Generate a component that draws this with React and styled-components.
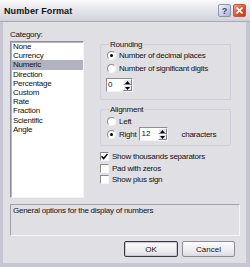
import React from 'react'
import styled, {createGlobalStyle} from 'styled-components'

const GlobalStyle = createGlobalStyle`
  html, body {
    margin: 0;
    padding: 0;
    background: #ffffff;
  }
  body {
    font-family: "Liberation Sans", Arial, sans-serif;
    color: #111;
  }
`

const Window = styled.div`
  width: 250px;
  height: 267px;
  display: flex;
  flex-direction: column;
  background: #c6c5d3;
`

const TitleBar = styled.div`
  height: 22px;
  flex: none;
  box-sizing: border-box;
  display: flex;
  align-items: center;
  padding: 0 4px 0 4px;
  background: linear-gradient(#fbfbfd 0%, #e6e6ec 45%, #d2d2dc 100%);
  border-bottom: 1px solid #a9a8b8;
`

const Title = styled.div`
  flex: 1;
  font-size: 9px;
  font-weight: bold;
  letter-spacing: 0.1px;
`

const CaptionButton = styled.div`
  width: 13px;
  height: 13px;
  box-sizing: border-box;
  margin-left: 2px;
  border-radius: 2px;
  border: 1px solid ${p => (p.close ? '#c4583a' : '#8e94b0')};
  background: ${p =>
    p.close
      ? 'linear-gradient(135deg, #f0a088, #d8502c 60%, #c43c1c)'
      : 'linear-gradient(135deg, #f4f6fb, #c8cce0 60%, #aeb3cc)'};
  display: flex;
  align-items: center;
  justify-content: center;
  font-size: 9px;
  font-weight: bold;
  color: #3c4466;
`

const Frame = styled.div`
  flex: 1;
  display: flex;
  flex-direction: column;
  border-left: 3px solid #c6c5d3;
  border-right: 4px solid #c6c5d3;
  border-bottom: 4px solid #c6c5d3;
`

const Body = styled.div`
  flex: 1;
  display: flex;
  flex-direction: column;
  background: #e0dfe3;
  padding: 8px 6px 6px 7px;
  font-size: 8px;
  letter-spacing: -0.25px;
`

const MainGrid = styled.div`
  display: grid;
  grid-template-columns: 74px 131px;
  column-gap: 16px;
  height: 168px;
`

const Column = styled.div`
  display: flex;
  flex-direction: column;
`

const Label = styled.div`
  height: 11px;
  line-height: 10px;
`

const ListBox = styled.div`
  height: 157px;
  box-sizing: border-box;
  background: #fff;
  border-top: 1px solid #8e8d98;
  border-left: 1px solid #8e8d98;
  border-right: 1px solid #f4f4f6;
  border-bottom: 1px solid #f4f4f6;
  box-shadow: inset 1px 1px 0 #b4b3bc;
`

const ListItem = styled.div`
  height: 9.2px;
  line-height: 9.2px;
  padding-left: 2px;
  background: ${p => (p.selected ? '#b3b2bf' : 'transparent')};
`

const Group = styled.fieldset`
  margin: ${p => p.top}px 0 0 0;
  padding: 0 4px ${p => p.bottom}px 6px;
  border: 1px solid #cfcedb;
  border-radius: 2px;
  min-inline-size: 0;
  display: flex;
  flex-direction: column;
`

const Legend = styled.legend`
  padding: 0 1px;
  margin-left: 2px;
  line-height: 9px;
  height: 9px;
`

const OptionRow = styled.div`
  display: flex;
  align-items: center;
  height: ${p => p.h || 11}px;
  margin-top: ${p => p.gap || 0}px;
`

const Radio = styled.span`
  width: 9px;
  height: 9px;
  box-sizing: border-box;
  flex: none;
  border-radius: 50%;
  background: #fff;
  border: 1px solid;
  border-color: #8a8993 #f6f6f8 #f6f6f8 #8a8993;
  margin-right: 3px;
  display: flex;
  align-items: center;
  justify-content: center;
  &::after {
    content: '';
    width: 3px;
    height: 3px;
    border-radius: 50%;
    background: ${p => (p.checked ? '#000' : 'transparent')};
  }
`

const SpinBox = styled.div`
  width: ${p => p.w}px;
  height: 14px;
  box-sizing: border-box;
  flex: none;
  display: flex;
  background: #fff;
  border-top: 1px solid #8e8d98;
  border-left: 1px solid #8e8d98;
  border-right: 1px solid #f4f4f6;
  border-bottom: 1px solid #f4f4f6;
  margin-left: ${p => p.ml || 0}px;
`

const SpinValue = styled.div`
  flex: 1;
  line-height: 11px;
  padding-left: 1px;
  letter-spacing: 0;
`

const SpinButtons = styled.div`
  width: 9px;
  display: flex;
  flex-direction: column;
`

const SpinButton = styled.div`
  flex: 1;
  background: #e6e5ea;
  border: 1px solid;
  border-color: #fdfdfd #85848e #85848e #fdfdfd;
  display: flex;
  align-items: center;
  justify-content: center;
`

const Suffix = styled.span`
  margin-left: 13px;
`

const CheckRow = styled.div`
  display: flex;
  align-items: center;
  height: 11.5px;
`

const CheckBox = styled.span`
  width: 9px;
  height: 9px;
  box-sizing: border-box;
  flex: none;
  background: #fff;
  border: 1px solid;
  border-color: #8a8993 #f6f6f8 #f6f6f8 #8a8993;
  margin-right: 3px;
  display: flex;
  align-items: center;
  justify-content: center;
`

const Checks = styled.div`
  margin-top: 5px;
  display: flex;
  flex-direction: column;
`

const Description = styled.div`
  margin-top: 6px;
  height: 32px;
  width: 230px;
  box-sizing: border-box;
  border: 1px solid #a09fab;
  border-right-color: #f6f6f8;
  border-bottom-color: #f6f6f8;
  padding: 1px 2px;
  line-height: 10px;
`

const ButtonRow = styled.div`
  margin-top: 5px;
  display: flex;
  justify-content: flex-end;
  gap: 4px;
  padding-right: 5px;
`

const Button = styled.div`
  width: ${p => p.w}px;
  height: 16px;
  box-sizing: border-box;
  border: 1px solid ${p => (p.primary ? '#3a3a44' : '#8c8b97')};
  border-radius: 2px;
  background: linear-gradient(#fbfbfc, #ebeaef 70%, #d9d8e0);
  box-shadow: ${p => (p.primary ? 'inset 0 0 0 1px #c8c8d4' : 'none')};
  display: flex;
  align-items: center;
  justify-content: center;
  letter-spacing: 0;
`

const Arrow = ({up}) => (
  <svg width="5" height="3" viewBox="0 0 5 3">
    <path d={up ? 'M0 3 L2.5 0 L5 3 Z' : 'M0 0 L2.5 3 L5 0 Z'} fill="#000" />
  </svg>
)

const Spin = ({value, w, ml}) => (
  <SpinBox w={w} ml={ml}>
    <SpinValue>{value}</SpinValue>
    <SpinButtons>
      <SpinButton><Arrow up /></SpinButton>
      <SpinButton><Arrow /></SpinButton>
    </SpinButtons>
  </SpinBox>
)

const Check = ({checked, children}) => (
  <CheckRow>
    <CheckBox>
      {checked && (
        <svg width="7" height="7" viewBox="0 0 7 7">
          <path d="M0.5 3.2 L2.6 5.5 L6.5 1" stroke="#000" strokeWidth="1.5" fill="none" />
        </svg>
      )}
    </CheckBox>
    {children}
  </CheckRow>
)

const categories = ['None', 'Currency', 'Numeric', 'Direction', 'Percentage', 'Custom', 'Rate', 'Fraction', 'Scientific', 'Angle']

export default function App() {
  return (
    <>
      <GlobalStyle />
      <Window>
        <TitleBar>
          <Title>Number Format</Title>
          <CaptionButton>?</CaptionButton>
          <CaptionButton close>
            <svg width="7" height="7" viewBox="0 0 7 7">
              <path d="M0.5 0.5 L6.5 6.5 M6.5 0.5 L0.5 6.5" stroke="#fff" strokeWidth="1.6" />
            </svg>
          </CaptionButton>
        </TitleBar>
        <Frame>
          <Body>
            <MainGrid>
              <Column>
                <Label>Category:</Label>
                <ListBox>
                  {categories.map(c => (
                    <ListItem key={c} selected={c === 'Numeric'}>{c}</ListItem>
                  ))}
                </ListBox>
              </Column>
              <Column>
                <Group top={10} bottom={7}>
                  <Legend>Rounding</Legend>
                  <OptionRow gap={1}><Radio checked />Number of decimal places</OptionRow>
                  <OptionRow gap={2}><Radio />Number of significant digits</OptionRow>
                  <OptionRow h={14} gap={4}><Spin value="0" w={27} ml={-1} /></OptionRow>
                </Group>
                <Group top={5} bottom={4}>
                  <Legend>Alignment</Legend>
                  <OptionRow gap={2}><Radio />Left</OptionRow>
                  <OptionRow h={14}>
                    <Radio checked />Right
                    <Spin value="12" w={29} ml={3} />
                    <Suffix>characters</Suffix>
                  </OptionRow>
                </Group>
                <Checks>
                  <Check checked>Show thousands separators</Check>
                  <Check>Pad with zeros</Check>
                  <Check>Show plus sign</Check>
                </Checks>
              </Column>
            </MainGrid>
            <Description>General options for the display of numbers</Description>
            <ButtonRow>
              <Button primary w={54}>OK</Button>
              <Button w={53}>Cancel</Button>
            </ButtonRow>
          </Body>
        </Frame>
      </Window>
    </>
  )
}
